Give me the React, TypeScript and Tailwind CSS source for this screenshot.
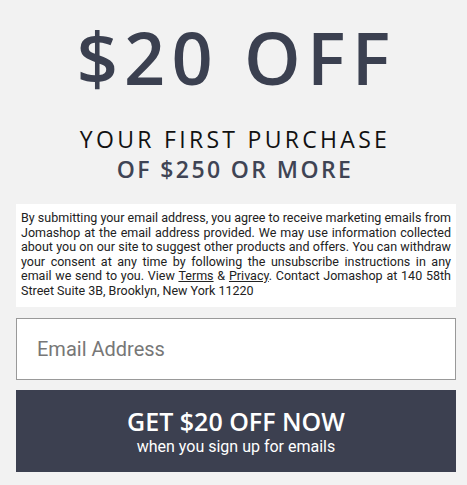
export default function App() {
  return (
    <div className="min-h-[485px] w-[467px] bg-[#f2f2f2] pt-[12px]">
      <h1 className="text-center font-['Open_Sans',sans-serif] text-[72px] font-semibold leading-[90px] tracking-[6.3px] text-[#3b4050] pl-[6px]">
        $20 OFF
      </h1>
      <div className="mt-[22px] text-center font-['Open_Sans',sans-serif] text-[23px] leading-[30px] pl-[3px] font-medium">
        <div className="text-[#111] tracking-[3.3px]">YOUR FIRST PURCHASE</div>
        <div className="text-[#3f4454] font-semibold tracking-[2.4px]">OF $250 OR MORE</div>
      </div>
      <div className="ml-4 w-[440px] mt-[20px]">
        <p className="bg-white px-[5px] pt-[7px] pb-[9px] text-justify font-['Roboto',sans-serif] text-[12.5px] leading-[14.5px] text-[#222]">
          By submitting your email address, you agree to receive marketing emails from Jomashop at the email address provided. We may use information collected about you on our site to suggest other products and offers. You can withdraw your consent at any time by following the unsubscribe instructions in any email we send to you. View{" "}
          <a className="underline">Terms</a> &amp; <a className="underline">Privacy</a>. Contact Jomashop at 140 58th Street Suite 3B, Brooklyn, New York 11220
        </p>
        <input
          type="email"
          placeholder="Email Address"
          className="mt-[11px] block h-[62px] w-full border border-[#999] bg-white px-5 font-['Roboto',sans-serif] text-[20px] text-[#333] placeholder:text-[#777] outline-none"
        />
        <button className="mt-[10px] flex h-[82px] w-full flex-col items-center justify-center bg-[#3c4050] text-white">
          <span className="font-['Open_Sans',sans-serif] text-[25px] font-semibold leading-[32px]">
            GET $20 OFF NOW
          </span>
          <span className="font-['Roboto',sans-serif] text-[16px] leading-[20px]">
            when you sign up for emails
          </span>
        </button>
      </div>
    </div>
  );
}
